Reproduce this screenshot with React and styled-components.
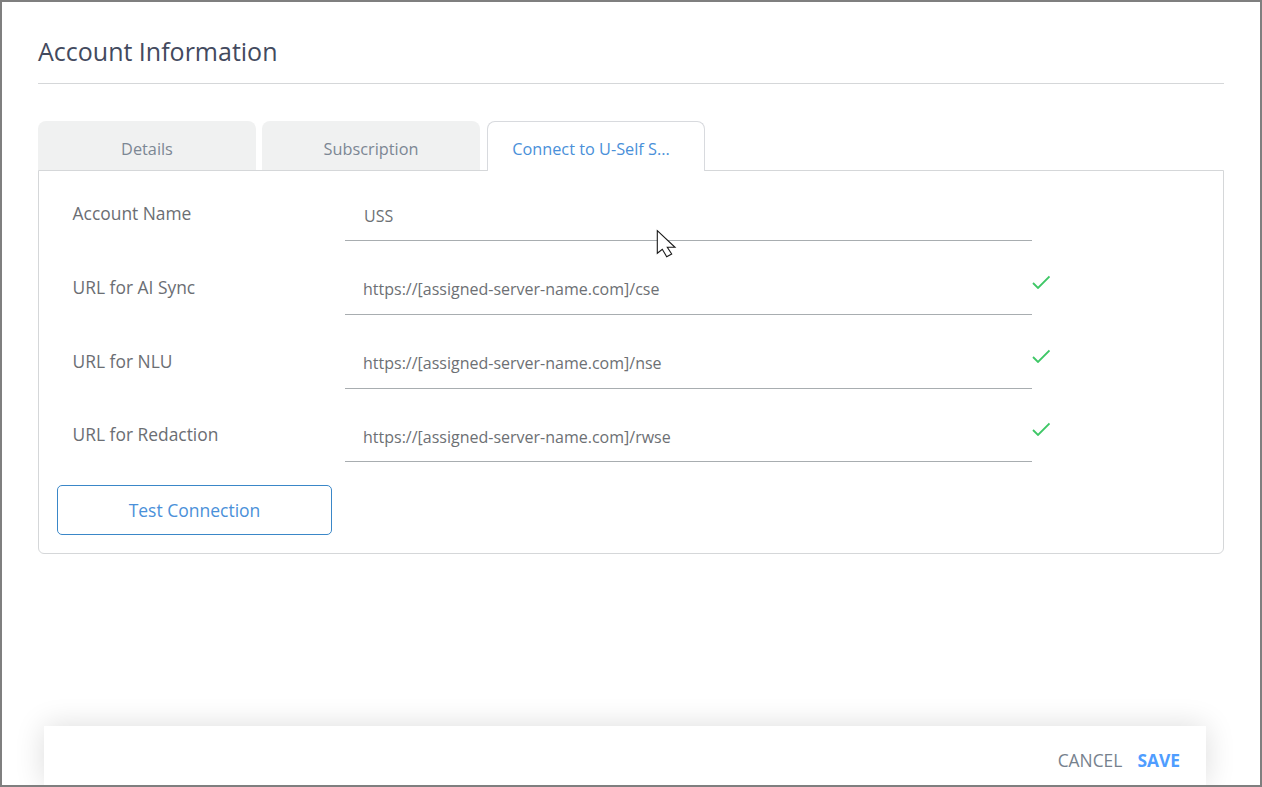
import React from 'react';
import styled, { createGlobalStyle } from 'styled-components';

const GlobalStyle = createGlobalStyle`
  html, body {
    margin: 0;
    padding: 0;
    background: #fff;
  }
  body {
    font-family: "Open Sans", "Liberation Sans", sans-serif;
  }
`;

const Frame = styled.div`
  position: relative;
  box-sizing: border-box;
  width: 1262px;
  height: 787px;
  border: 2px solid #7f7f7f;
  display: flex;
  flex-direction: column;
  overflow: hidden;
  background: #fff;
`;

const Content = styled.main`
  padding: 0 36px;
`;

const Title = styled.h1`
  margin: 0;
  height: 82px;
  box-sizing: border-box;
  padding-top: 32px;
  border-bottom: 1px solid #d5d7d9;
  font-size: 25px;
  line-height: 34px;
  font-weight: 400;
  color: #434a5e;
`;

const Tabs = styled.div`
  display: flex;
  align-items: flex-start;
  gap: 6px;
  margin-top: 37px;
  position: relative;
  z-index: 1;
`;

const Tab = styled.div`
  box-sizing: border-box;
  width: 218px;
  height: 49px;
  padding-top: 16px;
  text-align: center;
  font-size: 16.3px;
  line-height: 24px;
  border-radius: 8px 8px 0 0;
  color: #7c8794;
  background: #f0f1f1;
`;

const ActiveTab = styled(Tab)`
  height: 50px;
  margin-left: 1px;
  margin-bottom: -1px;
  padding: 15px 10px 0 0;
  color: #4a90d9;
  background: #fff;
  border: 1px solid #d8dade;
  border-bottom: 0;
`;

const Panel = styled.section`
  box-sizing: border-box;
  height: 384px;
  border: 1px solid #d5d7d9;
  border-radius: 0 0 6px 6px;
  padding: 26px 18px 18px;
  display: flex;
  flex-direction: column;
`;

const Rows = styled.div`
  display: flex;
  flex-direction: column;
  gap: 29.8px;
`;

const Row = styled.div`
  display: grid;
  grid-template-columns: 288px 687px 18px;
  height: 44px;
`;

const Label = styled.label`
  padding-left: 15.6px;
  font-size: 17.4px;
  line-height: 24px;
  color: #6b6e73;
  margin-top: 4px;
`;

const Field = styled.div`
  box-sizing: border-box;
  border-bottom: 1px solid #a8adb0;
  padding-left: ${(p) => (p.$large ? '19px' : '18px')};
  padding-top: ${(p) => (p.$large ? '7px' : '6.5px')};
  font-size: 16px;
  line-height: 24px;
  color: #6d7074;
`;

const Check = styled.svg`
  width: 18px;
  height: 14px;
  margin-top: 4px;
`;

const TestButton = styled.button`
  box-sizing: border-box;
  width: 275px;
  height: 50px;
  margin-top: 22.6px;
  background: #fff;
  border: 1px solid #3a87c8;
  border-radius: 5px;
  font-family: inherit;
  font-size: 17.5px;
  color: #4a90d9;
`;

const Footer = styled.footer`
  margin: auto 54px 0 42px;
  height: 59px;
  box-sizing: border-box;
  background: #fff;
  box-shadow: 0 0 30px rgba(0, 0, 0, 0.14);
  display: flex;
  justify-content: flex-end;
  align-items: flex-start;
  gap: 15px;
  padding: 20px 26px 0 0;
`;

const FooterAction = styled.span`
  font-size: 17.4px;
  line-height: 28px;
  font-weight: ${(p) => (p.$primary ? 700 : 400)};
  color: ${(p) => (p.$primary ? '#4f9dff' : '#76818d')};
`;

const Cursor = styled.svg`
  position: absolute;
  left: 654px;
  top: 227px;
  width: 21px;
  height: 30px;
`;

const rows = [
  { label: 'Account Name', value: 'USS', large: true },
  { label: 'URL for AI Sync', value: 'https://[assigned-server-name.com]/cse', ok: true },
  { label: 'URL for NLU', value: 'https://[assigned-server-name.com]/nse', ok: true },
  { label: 'URL for Redaction', value: 'https://[assigned-server-name.com]/rwse', ok: true },
];

export default function App() {
  return (
    <Frame>
      <GlobalStyle />
      <Content>
        <Title>Account Information</Title>
        <Tabs>
          <Tab>Details</Tab>
          <Tab>Subscription</Tab>
          <ActiveTab>Connect to U-Self S...</ActiveTab>
        </Tabs>
        <Panel>
          <Rows>
            {rows.map((r) => (
              <Row key={r.label}>
                <Label>{r.label}</Label>
                <Field $large={r.large}>{r.value}</Field>
                {r.ok && (
                  <Check viewBox="0 0 18 14" fill="none">
                    <path d="M1 8 L6 13 L17.5 1.5" stroke="#3ec766" strokeWidth="1.8" />
                  </Check>
                )}
              </Row>
            ))}
          </Rows>
          <TestButton>Test Connection</TestButton>
        </Panel>
      </Content>
      <Footer>
        <FooterAction>CANCEL</FooterAction>
        <FooterAction $primary>SAVE</FooterAction>
      </Footer>
      <Cursor viewBox="0 0 21 30">
        <path
          d="M1.3 1.7 L19 18.3 L11.3 18.3 L15.7 25 L10.7 27.7 L6.3 20.3 L1.3 24.3 Z"
          fill="#fff"
          stroke="#1a1a1a"
          strokeWidth="1.1"
        />
      </Cursor>
    </Frame>
  );
}
